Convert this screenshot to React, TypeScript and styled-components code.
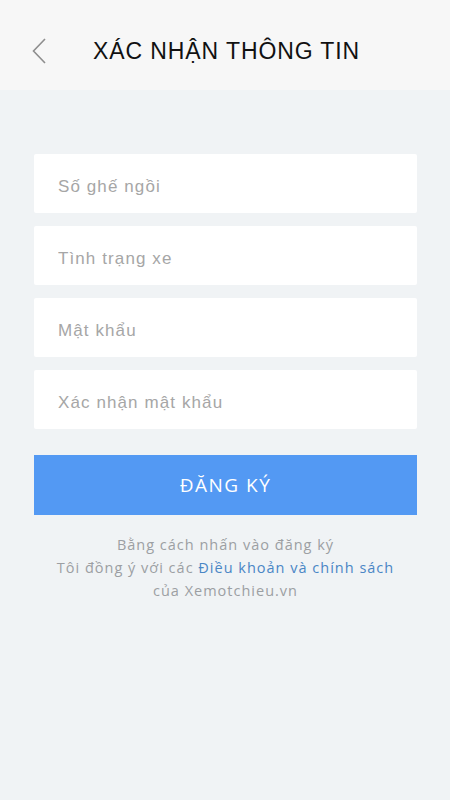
import React from 'react';
import styled, {createGlobalStyle} from 'styled-components';

const GlobalStyle = createGlobalStyle`
    html, body {
        margin: 0;
        padding: 0;
        background-color: #f0f3f5;
        font-family: 'Open Sans', 'Liberation Sans', sans-serif;
    }
`;

const Page = styled.div`
    min-height: 800px;
    background-color: #f0f3f5;
`;

const Header = styled.header`
    height: 90px;
    background-color: #f7f7f7;
    display: flex;
    align-items: center;
    padding: 12px 0 0 32px;
    box-sizing: border-box;
`;

const BackButton = styled.button`
    border: none;
    background: none;
    padding: 0;
    width: 18px;
    height: 28px;
    display: flex;
    align-items: center;
    cursor: pointer;
`;

const HeaderTitle = styled.h1`
    margin: 0 0 0 43px;
    font-family: 'Liberation Sans', Arial, sans-serif;
    font-weight: 400;
    font-size: 23px;
    letter-spacing: 0.9px;
    color: #111;
`;

const Form = styled.form`
    display: flex;
    flex-direction: column;
    gap: 13px;
    padding: 64px 33px 0 34px;
`;

const Field = styled.input`
    box-sizing: border-box;
    height: 59px;
    border: none;
    border-radius: 2px;
    background-color: #fff;
    padding: 6px 24px 0;
    font-family: 'Liberation Sans', Arial, sans-serif;
    font-size: 17px;
    letter-spacing: 1.1px;
    color: #333;
    outline: none;

    &::placeholder {
        color: #a6a6a6;
    }
`;

const SubmitButton = styled.button`
    margin-top: 13px;
    height: 60px;
    border: none;
    background-color: #5399f3;
    color: #fff;
    font-family: 'Open Sans', sans-serif;
    font-size: 19px;
    letter-spacing: 1.5px;
`;

const Note = styled.p`
    margin: 5px 0 0;
    text-align: center;
    font-family: 'Open Sans', sans-serif;
    font-size: 14.5px;
    line-height: 23px;
    letter-spacing: 1px;
    color: #9c9fa3;
`;

const Link = styled.a`
    color: #4a86c5;
    text-decoration: none;
`;

const fields = ["Số ghế ngồi", "Tình trạng xe", "Mật khẩu", "Xác nhận mật khẩu"];

export default function App() {
    return (
        <Page>
            <GlobalStyle/>
            <Header>
                <BackButton aria-label="Quay lại">
                    <svg width="14" height="26" viewBox="0 0 14 26">
                        <path d="M13 1 L1.5 13 L13 25" fill="none" stroke="#8e8e8e" strokeWidth="1.6"/>
                    </svg>
                </BackButton>
                <HeaderTitle>XÁC NHẬN THÔNG TIN</HeaderTitle>
            </Header>
            <Form onSubmit={e => e.preventDefault()}>
                {fields.map(f => (
                    <Field key={f} placeholder={f} type={f.toLowerCase().includes("mật") ? "password" : "text"}/>
                ))}
                <SubmitButton type="submit">ĐĂNG KÝ</SubmitButton>
                <Note>
                    Bằng cách nhấn vào đăng ký<br/>
                    Tôi đồng ý với các <Link href="#">Điều khoản và chính sách</Link><br/>
                    của Xemotchieu.vn
                </Note>
            </Form>
        </Page>
    );
}
